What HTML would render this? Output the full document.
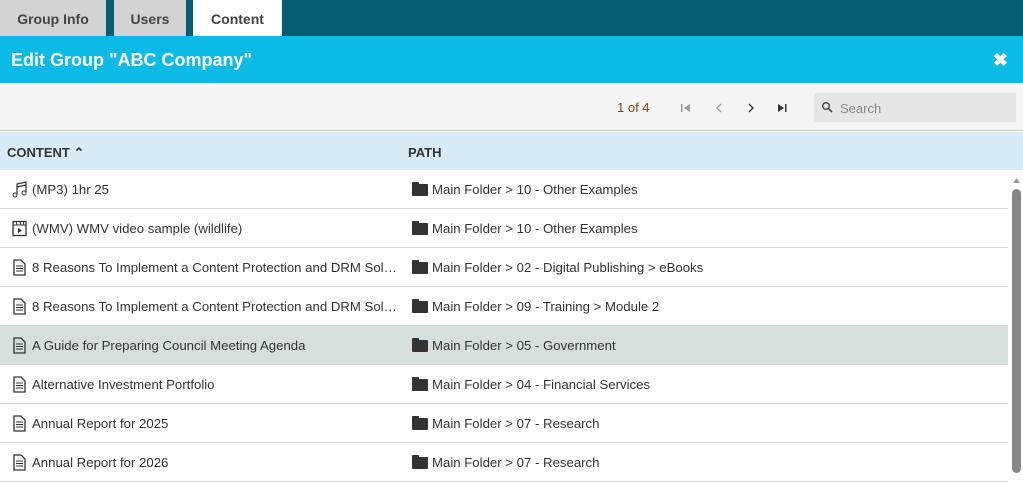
<!DOCTYPE html>
<html><head><style>
*{margin:0;padding:0;box-sizing:border-box}
body{width:1023px;height:483px;overflow:hidden;font-family:"Liberation Sans",sans-serif;background:#fff;position:relative;color:#333}
.top{position:absolute;left:0;top:0;width:1023px;height:36px;background:#035c70}
.tab{position:absolute;top:0;height:36px;font-size:14px;font-weight:bold;color:#444;text-align:center;line-height:38px}
.hdr{position:absolute;top:36px;left:0;width:1023px;height:47px;background:#0bbbe6;color:#fff;font-size:18px;font-weight:bold;line-height:48px;padding-left:11px}
.x{position:absolute;right:15px;top:0;font-size:18px}
.tb{position:absolute;top:83px;left:0;width:1023px;height:48px;background:#f4f4f4;border-bottom:1px solid #ccc}
.ch{position:absolute;top:132px;left:0;width:1023px;height:38px;background:#d7ecf7;font-size:13px;font-weight:bold;line-height:42px;color:#333}
.row{position:absolute;left:0;width:1008px;height:39px;border-bottom:1px solid #d8d8d8;font-size:13.2px;line-height:40px;color:#333}
.c1{position:absolute;left:32px;width:368px;white-space:nowrap;overflow:hidden;text-overflow:ellipsis}
.c2{position:absolute;left:432px}
.ic{position:absolute;left:12px;top:11px}
.fo{position:absolute;left:412px;top:14px;width:16px;height:12px;background:#333;border-radius:1px}
.fo:before{content:"";position:absolute;left:0;top:-2px;width:7px;height:3px;background:#333;border-radius:1px 1px 0 0}
</style></head><body>
<div class="top">
<div class="tab" style="left:0;width:106px;background:#d3d3d4">Group Info</div>
<div class="tab" style="left:114px;width:72px;background:#d3d3d4">Users</div>
<div class="tab" style="left:193px;width:89px;background:#fff">Content</div>
</div>
<div class="hdr">Edit Group "ABC Company"<span class="x">✖</span></div>
<div class="tb">
<span style="position:absolute;left:617px;top:17px;font-size:13px;color:#7a4a10">1 of 4</span>
<svg style="position:absolute;left:680px;top:19px" width="12" height="12"><rect x="1" y="2" width="1.5" height="8" fill="#999"/><path d="M10 2L4 6L10 10Z" fill="#999"/></svg>
<svg style="position:absolute;left:713px;top:19px" width="12" height="12"><path d="M8 2L4 6L8 10" stroke="#999" stroke-width="1.3" fill="none"/></svg>
<svg style="position:absolute;left:745px;top:19px" width="12" height="12"><path d="M4 2L8 6L4 10" stroke="#333" stroke-width="1.3" fill="none"/></svg>
<svg style="position:absolute;left:776px;top:19px" width="12" height="12"><path d="M2 2L8 6L2 10Z" fill="#333"/><rect x="9" y="2" width="1.5" height="8" fill="#333"/></svg>
<div style="position:absolute;left:814px;top:10px;width:202px;height:29px;background:#e5e6e7">
<svg style="position:absolute;left:7px;top:8px" width="12" height="12"><circle cx="5" cy="5" r="3.3" stroke="#444" stroke-width="1.4" fill="none"/><path d="M7.5 7.5L11 11" stroke="#444" stroke-width="1.6"/></svg>
<span style="position:absolute;left:26px;top:8px;font-size:13px;color:#888">Search</span></div>
</div>
<div class="ch"><span style="position:absolute;left:7px">CONTENT ⌃</span><span style="position:absolute;left:408px">PATH</span></div>

<div class="row" style="top:170px"><svg class="ic" width="16" height="17"><path d="M5 13V3L14 1V11" stroke="#333" stroke-width="1.2" fill="none"/><path d="M5 6L14 4" stroke="#333" stroke-width="1.2"/><circle cx="3" cy="14" r="2" stroke="#333" fill="none"/><circle cx="12" cy="12" r="2" stroke="#333" fill="none"/></svg><span class="c1">(MP3) 1hr 25</span><div class="fo"></div><span class="c2">Main Folder &gt; 10 - Other Examples</span></div>
<div class="row" style="top:209px"><svg class="ic" width="16" height="17"><rect x="1" y="1.5" width="13" height="14" stroke="#333" stroke-width="1.3" fill="none"/><path d="M1 5H14M4 1.5L5 5M8 1.5L9 5M11 1.5L12 5" stroke="#333"/><path d="M6 8L10 10.5L6 13Z" fill="#333"/></svg><span class="c1">(WMV) WMV video sample (wildlife)</span><div class="fo"></div><span class="c2">Main Folder &gt; 10 - Other Examples</span></div>
<div class="row" style="top:248px"><svg class="ic" width="16" height="17"><path d="M2 1H9L13 5V16H2Z" stroke="#333" stroke-width="1.3" fill="none"/><path d="M4 7H11M4 9.5H11M4 12H11" stroke="#333"/></svg><span class="c1">8 Reasons To Implement a Content Protection and DRM Solution</span><div class="fo"></div><span class="c2">Main Folder &gt; 02 - Digital Publishing &gt; eBooks</span></div>
<div class="row" style="top:287px"><svg class="ic" width="16" height="17"><path d="M2 1H9L13 5V16H2Z" stroke="#333" stroke-width="1.3" fill="none"/><path d="M4 7H11M4 9.5H11M4 12H11" stroke="#333"/></svg><span class="c1">8 Reasons To Implement a Content Protection and DRM Solution</span><div class="fo"></div><span class="c2">Main Folder &gt; 09 - Training &gt; Module 2</span></div>
<div class="row" style="top:326px;background:#d5dfe0"><svg class="ic" width="16" height="17"><path d="M2 1H9L13 5V16H2Z" stroke="#333" stroke-width="1.3" fill="none"/><path d="M4 7H11M4 9.5H11M4 12H11" stroke="#333"/></svg><span class="c1">A Guide for Preparing Council Meeting Agenda</span><div class="fo"></div><span class="c2">Main Folder &gt; 05 - Government</span></div>
<div class="row" style="top:365px"><svg class="ic" width="16" height="17"><path d="M2 1H9L13 5V16H2Z" stroke="#333" stroke-width="1.3" fill="none"/><path d="M4 7H11M4 9.5H11M4 12H11" stroke="#333"/></svg><span class="c1">Alternative Investment Portfolio</span><div class="fo"></div><span class="c2">Main Folder &gt; 04 - Financial Services</span></div>
<div class="row" style="top:404px"><svg class="ic" width="16" height="17"><path d="M2 1H9L13 5V16H2Z" stroke="#333" stroke-width="1.3" fill="none"/><path d="M4 7H11M4 9.5H11M4 12H11" stroke="#333"/></svg><span class="c1">Annual Report for 2025</span><div class="fo"></div><span class="c2">Main Folder &gt; 07 - Research</span></div>
<div class="row" style="top:443px"><svg class="ic" width="16" height="17"><path d="M2 1H9L13 5V16H2Z" stroke="#333" stroke-width="1.3" fill="none"/><path d="M4 7H11M4 9.5H11M4 12H11" stroke="#333"/></svg><span class="c1">Annual Report for 2026</span><div class="fo"></div><span class="c2">Main Folder &gt; 07 - Research</span></div>

<svg style="position:absolute;left:1012px;top:176px" width="9" height="8"><path d="M1 7L4.5 2L8 7Z" fill="#999"/></svg>
<div style="position:absolute;left:1012px;top:189px;width:9px;height:284px;background:#878787;border-radius:5px"></div>
</body></html>
